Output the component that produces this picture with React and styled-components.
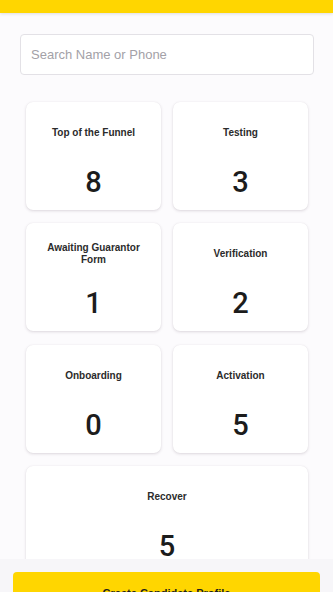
import React from "react";
import styled, { createGlobalStyle } from "styled-components";

const Global = createGlobalStyle`
  html, body { margin: 0; padding: 0; background: #fcfbfd; }
  body { font-family: "Liberation Sans", Arial, sans-serif; color: #1e1e1e; }
  * { box-sizing: border-box; }
`;

const Page = styled.div`
  min-height: 100vh;
  display: flex;
  flex-direction: column;
  background: #fcfbfd;
`;

const TopBar = styled.div`
  height: 13px;
  background: #ffd600;
  box-shadow: 0 1px 3px rgba(0, 0, 0, 0.12);
`;

const Content = styled.div`
  display: flex;
  flex-direction: column;
  padding: 21px 19px 80px 20px;
`;

const Search = styled.input`
  height: 41px;
  width: 100%;
  border: 1px solid #e3e1e6;
  border-radius: 4px;
  background: #fff;
  padding: 0 10px;
  font-family: "Liberation Sans", Arial, sans-serif;
  font-size: 13px;
  color: #222;
  outline: none;
  &::placeholder { color: #a3a1a7; }
`;

const Grid = styled.div`
  display: grid;
  grid-template-columns: 1fr 1fr;
  column-gap: 12px;
  row-gap: 13.4px;
  margin: 27px 6px 0 6px;
`;

const Card = styled.div`
  grid-column: ${(p) => (p.$wide ? "1 / span 2" : "auto")};
  height: 108px;
  background: #fff;
  border-radius: 7px;
  box-shadow: 0 1px 3px rgba(60, 40, 60, 0.16), 0 0 1px rgba(60, 40, 60, 0.08);
  display: flex;
  flex-direction: column;
  align-items: center;
  padding-top: 16px;
`;

const Label = styled.div`
  height: 30px;
  display: flex;
  align-items: center;
  justify-content: center;
  text-align: center;
  font-size: 10px;
  line-height: 12px;
  font-weight: 700;
  color: #2b2b2b;
  padding: 0 18px;
`;

const Count = styled.div`
  margin-top: 18px;
  font-family: Roboto, "Liberation Sans", sans-serif;
  font-size: 29px;
  line-height: 32px;
  font-weight: 500;
  color: #1c1c1c;
`;

const Footer = styled.div`
  position: fixed;
  left: 0;
  right: 0;
  bottom: 0;
  height: 33px;
  overflow: hidden;
  background: #f7f6f9;
  padding: 13px 13px 0 13px;
`;

const Button = styled.button`
  width: 100%;
  height: 42px;
  border: none;
  border-radius: 4px;
  background: #ffd600;
  font-family: "Liberation Sans", Arial, sans-serif;
  font-size: 11px;
  font-weight: 700;
  color: #1e1e1e;
  padding: 0;
`;

const stages = [
  { label: "Top of the Funnel", count: 8 },
  { label: "Testing", count: 3 },
  { label: "Awaiting Guarantor Form", count: 1 },
  { label: "Verification", count: 2 },
  { label: "Onboarding", count: 0 },
  { label: "Activation", count: 5 },
  { label: "Recover", count: 5, wide: true },
];

export default function App() {
  return (
    <Page>
      <Global />
      <TopBar />
      <Content>
        <Search placeholder="Search Name or Phone" />
        <Grid>
          {stages.map((s) => (
            <Card key={s.label} $wide={s.wide}>
              <Label>{s.label}</Label>
              <Count>{s.count}</Count>
            </Card>
          ))}
        </Grid>
      </Content>
      <Footer>
        <Button>Create Candidate Profile</Button>
      </Footer>
    </Page>
  );
}
